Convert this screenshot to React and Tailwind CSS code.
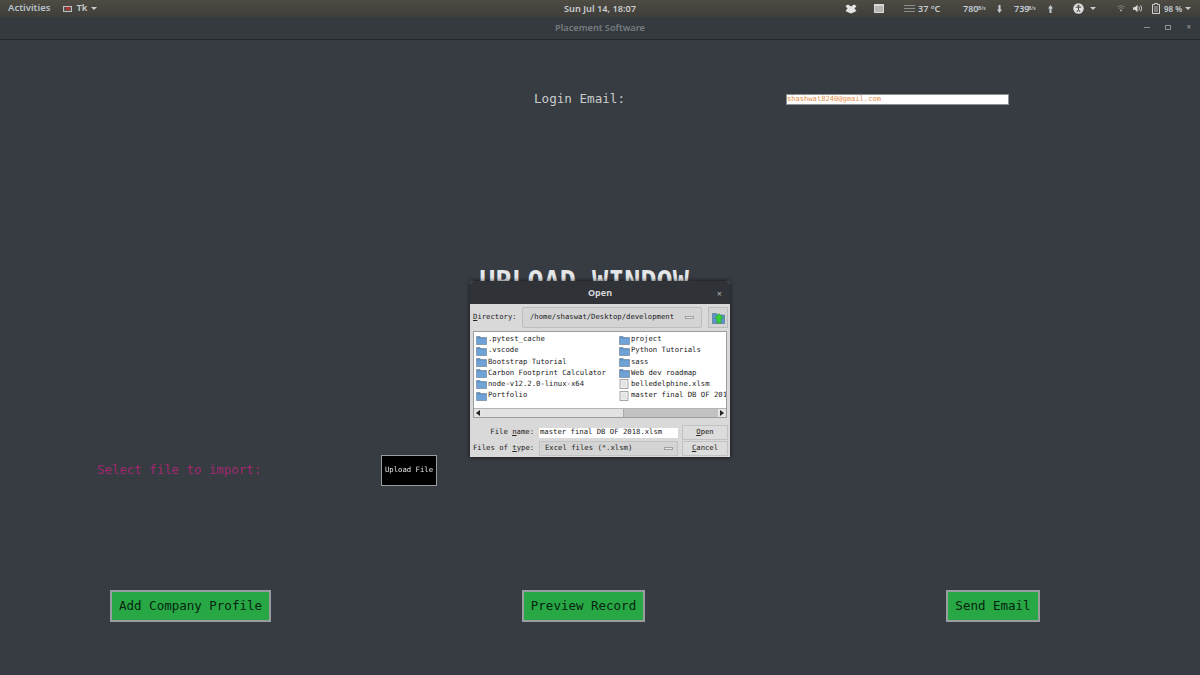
import React from 'react';

const MONO = 'font-["DejaVu_Sans_Mono","Liberation_Mono",monospace]';
const UI = 'font-["Noto_Sans","Open_Sans",sans-serif]';

const Folder = () => (
  <svg width="11" height="10" viewBox="0 0 11 10" className="shrink-0">
    <path d="M0.5 1.5 L4 1.5 L5 2.5 L10.5 2.5 L10.5 9.5 L0.5 9.5 Z" fill="#5f8fc4" stroke="#6b7d92" strokeWidth="0.6" />
    <rect x="1" y="3.5" width="9" height="5.5" fill="#6fa3d8" />
  </svg>
);

const FileIcon = () => (
  <svg width="11" height="10" viewBox="0 0 11 10" className="shrink-0">
    <rect x="1" y="0.5" width="8" height="9" fill="#eeeeee" stroke="#a8a8a8" />
    <path d="M3 3h4M3 5h4M3 7h4" stroke="#cfcfcf" strokeWidth="0.7" />
  </svg>
);

const ComboArrow = () => <span className="h-[3px] w-[9px] shrink-0 border border-[#a0a0a0] bg-[#e8e8e8]" />;

const Caret = ({ className }) => (
  <span className={`h-0 w-0 border-x-[3px] border-t-[3px] border-x-transparent border-t-[#c9cdd0] ${className}`} />
);

const FileRow = ({ name, file }) => (
  <div className="flex h-[11.2px] items-center gap-px whitespace-nowrap">
    {file ? <FileIcon /> : <Folder />}
    <span>{name}</span>
  </div>
);

const GreenButton = ({ children, className }) => (
  <div className={`flex h-[32px] items-center justify-center border-2 border-[#9a9d9f] bg-[#28a745] text-[12.5px] text-[#06240f] ${MONO} ${className}`}>
    {children}
  </div>
);

const TopBar = () => (
  <div className={`flex h-[17px] items-center justify-between bg-gradient-to-b from-[#4e4b43] to-[#3f3e3a] text-[9px] font-semibold text-[#c9cdd0] ${UI}`}>
    <div className="flex items-center">
      <span className="ml-[8px] text-[9.5px] text-[#b9c2c9]">Activities</span>
      <span className="ml-[13px] flex h-[6px] w-[9px] items-center justify-center border border-[#bdbdbd] bg-[#555]">
        <span className="h-[3px] w-[4px] bg-[#b03030]" />
      </span>
      <span className="ml-[4px] text-[9.5px]">Tk</span>
      <Caret className="ml-[4px]" />
    </div>
  </div>
);

const Tray = () => (
  <div className={`absolute left-[845px] top-0 flex h-[17px] items-center whitespace-nowrap text-[9px] font-semibold text-[#c4ccd4] ${UI}`}>
    <svg width="12" height="10" viewBox="0 0 12 10" className="mr-[17px] shrink-0">
      <path d="M0.5 2 L3 0.5 L6 2.5 L9 0.5 L11.5 2 L9.5 4.5 L11.5 7 L8.5 8.5 L6 9.5 L3.5 8.5 L0.5 7 L2.5 4.5 Z" fill="#e4e4e4" />
    </svg>
    <svg width="10" height="9" viewBox="0 0 10 9" className="mr-[20px] shrink-0">
      <rect width="10" height="9" fill="#d8d8d8" />
      <path d="M1 3h8M1 5h8M1 7h8" stroke="#77766f" strokeWidth="0.7" />
    </svg>
    <svg width="11" height="9" viewBox="0 0 11 9" className="mr-[3px] shrink-0">
      <path d="M0 1.5h11M0 4.5h11M0 7.5h11" stroke="#8d8f8c" strokeWidth="1.2" />
    </svg>
    <span className="mr-[24px] w-[21px] text-[9px]">37 °C</span>
    <span className="w-[15px]">780</span>
    <span className="mr-[9px] w-[10px] text-[5px]">B/s</span>
    <svg width="5" height="8" viewBox="0 0 5 8" className="mr-[12px] shrink-0">
      <path d="M1.5 0h2v4.5h1.5L2.5 8 0 4.5h1.5Z" fill="#c4ccd4" />
    </svg>
    <span className="w-[14px]">739</span>
    <span className="mr-[10px] w-[10px] text-[5px]">B/s</span>
    <svg width="5" height="8" viewBox="0 0 5 8" className="mr-[20px] shrink-0">
      <path d="M1.5 8h2V3.5h1.5L2.5 0 0 3.5h1.5Z" fill="#c4ccd4" />
    </svg>
    <svg width="11" height="11" viewBox="0 0 11 11" className="mr-[6px] shrink-0">
      <circle cx="5.5" cy="5.5" r="5.2" fill="#dedede" />
      <circle cx="5.5" cy="2.8" r="1" fill="#45443f" />
      <path d="M2.8 4.2h5.4M5.5 4.2v2.6M5.5 6.5L3.8 9M5.5 6.5L7.2 9" stroke="#45443f" strokeWidth="1" fill="none" />
    </svg>
    <Caret className="mr-[21px]" />
    <svg width="8" height="9" viewBox="0 0 10 9" className="mr-[8px] shrink-0">
      <path d="M0.5 2.5 Q5 -1 9.5 2.5 M2 4.5 Q5 2.2 8 4.5" stroke="#8b8b85" strokeWidth="1" fill="none" />
      <path d="M3.5 6 L6.5 6 L5 8.5 Z" fill="#c9c9c5" />
    </svg>
    <svg width="10" height="9" viewBox="0 0 11 9" className="mr-[9px] shrink-0">
      <path d="M0 3h2L5 0.5v8L2 6H0Z" fill="#dcdcdc" />
      <path d="M6.5 2.5q1.2 2 0 4M8.5 1q2 3.5 0 7" stroke="#dcdcdc" fill="none" />
    </svg>
    <svg width="9" height="11" viewBox="0 0 9 11" className="mr-[3px] shrink-0">
      <path d="M0.5 1.5h2V0.5h3v1h2v9h-7Z" fill="none" stroke="#d2d2d2" />
      <path d="M2 4h4M2 6h4M2 8h4" stroke="#d2d2d2" strokeWidth="0.8" />
    </svg>
    <span className="mr-[4px] w-[17px] text-[8px]">98 %</span>
    <Caret />
  </div>
);

const TitleBar = () => (
  <div className={`relative flex h-[23px] items-center justify-center border-b border-[#24272b] bg-[#353a3f] text-[9.2px] font-semibold text-[#777c80] ${UI}`}>
    Placement Software
    <div className="absolute right-[9px] top-[6px] flex items-center gap-[15px] text-[#8b9094]">
      <span className="h-px w-[6px] bg-[#8b9094]" />
      <span className="h-[5px] w-[6px] border border-[#8b9094]" />
      <span className="text-[8px] leading-none">×</span>
    </div>
  </div>
);

const OpenDialog = () => (
  <div className={`absolute left-[470px] top-[281px] w-[260px] overflow-hidden rounded-t-[4px] bg-[#d9d9d9] text-[7.25px] text-[#222] shadow-[0_0_4px_rgba(0,0,0,0.7)] ${MONO}`}>
    <div className={`relative flex h-[23px] items-center justify-center bg-[#2f3236] text-[9px] font-bold text-[#d4d6d8] ${UI}`}>
      Open
      <span className="absolute right-[8px] top-[6px] text-[9px] font-normal text-[#b0b3b6]">×</span>
    </div>
    <div className="flex items-center pl-[3px] pt-[3px]">
      <span className="w-[49px] shrink-0"><u>D</u>irectory:</span>
      <div className="flex h-[21px] w-[180px] shrink-0 items-center justify-between rounded-[2px] border border-[#bdbdbd] bg-[#d4d4d4] px-[7px]">
        <span>/home/shaswat/Desktop/development</span>
        <ComboArrow />
      </div>
      <div className="ml-[6px] flex h-[21px] w-[20px] shrink-0 items-center justify-center border border-[#bdbdbd] bg-[#d4d4d4]">
        <svg width="13" height="12" viewBox="0 0 13 12">
          <path d="M0.5 1.5h4l1 1.5h7v8.5h-12Z" fill="#5f93c8" stroke="#48698c" strokeWidth="0.6" />
          <path d="M7 1.5 L11.5 6.5 L9 6.5 L9 11 L5 11 L5 6.5 L2.5 6.5 Z" fill="#35d035" stroke="#1f8f2a" strokeWidth="0.4" />
        </svg>
      </div>
    </div>
    <div className="mx-[3px] mt-[3px] border border-[#9d9d9d] bg-white">
      <div className="flex h-[76px] overflow-hidden pl-[2px] pt-[2px]">
        <div className="w-[143px] shrink-0">
          <FileRow name=".pytest_cache" />
          <FileRow name=".vscode" />
          <FileRow name="Bootstrap Tutorial" />
          <FileRow name="Carbon Footprint Calculator" />
          <FileRow name="node-v12.2.0-linux-x64" />
          <FileRow name="Portfolio" />
        </div>
        <div className="min-w-0">
          <FileRow name="project" />
          <FileRow name="Python Tutorials" />
          <FileRow name="sass" />
          <FileRow name="Web dev roadmap" />
          <FileRow name="belledelphine.xlsm" file />
          <FileRow name="master final DB OF 2018.xlsm" file />
        </div>
      </div>
      <div className="flex h-[9px] items-center border-t border-[#b5b5b5] bg-[#e4e4e4]">
        <span className="ml-[2px] h-0 w-0 border-y-[3px] border-r-[4px] border-y-transparent border-r-[#222]" />
        <span className="ml-[2px] h-full w-[141px] bg-[#e2e2e2]" />
        <span className="h-full flex-1 border-l border-[#a8a8a8] bg-[#c2c2c2]" />
        <span className="mx-[2px] h-0 w-0 border-y-[3px] border-l-[4px] border-y-transparent border-l-[#222]" />
      </div>
    </div>
    <div className="flex flex-col gap-px pb-px pl-[3px] pt-[7px]">
      <div className="flex h-[15px] items-center">
        <span className="w-[66px] shrink-0 whitespace-nowrap pr-[5px] text-right">File <u>n</u>ame:</span>
        <span className="flex h-[10px] w-[139px] shrink-0 items-center whitespace-nowrap bg-white pl-px">master final DB OF 2018.xlsm</span>
        <span className="ml-[4px] flex h-[15px] w-[46px] shrink-0 items-center justify-center border border-[#c2c2c2] bg-[#dcdcdc]"><u>O</u>pen</span>
      </div>
      <div className="flex h-[15px] items-center">
        <span className="w-[66px] shrink-0 whitespace-nowrap pr-[5px] text-right">Files of <u>t</u>ype:</span>
        <span className="flex h-[15px] w-[139px] shrink-0 items-center justify-between border border-[#c2c2c2] bg-[#d4d4d4] pl-[5px] pr-[4px]">
          Excel files (*.xlsm)
          <ComboArrow />
        </span>
        <span className="ml-[4px] flex h-[15px] w-[46px] shrink-0 items-center justify-center border border-[#c2c2c2] bg-[#dcdcdc]"><u>C</u>ancel</span>
      </div>
    </div>
  </div>
);

export default function App() {
  return (
    <div className="relative h-[675px] w-[1200px] overflow-hidden bg-[#373b42]">
      <TopBar />
      <Tray />
      <div className={`pointer-events-none absolute left-0 top-[2px] flex w-full justify-center text-[9.2px] font-semibold text-[#c9cdd0] ${UI}`}>
        Sun Jul 14, 18:07
      </div>
      <TitleBar />
      <div className={`flex h-[635px] flex-col ${MONO}`}>
        <div className="box-content flex h-[14px] items-center pl-[534px] pt-[52px]">
          <span className="w-[252px] text-[12.6px] text-[#c9cccb]">Login Email:</span>
          <div className="flex h-[11px] w-[223px] items-center border border-[#8d9094] bg-white text-[7.1px] text-[#e98d45]">
            shashwat8240@gmail.com
          </div>
        </div>
        <div className="mt-[160px] flex h-[30px] justify-center text-[26.8px] font-bold leading-[30px] text-[#e4e6e8]">
          <span className="mr-[32px]">UPLOAD WINDOW</span>
        </div>
        <div className="mt-[159px] flex h-[31px] items-center pl-[97px]">
          <span className="w-[284px] text-[12.4px] text-[#a1296e]">Select file to import:</span>
          <div className="flex h-[31px] w-[56px] items-center justify-center border border-[#9a9d9f] bg-black text-[7.25px] text-[#e2e2e2] will-change-transform">
            Upload File
          </div>
        </div>
        <div className="mt-[104px] flex pl-[110px]">
          <GreenButton className="w-[161px]">Add Company Profile</GreenButton>
          <GreenButton className="ml-[251px] w-[123px]">Preview Record</GreenButton>
          <GreenButton className="ml-[301px] w-[94px]">Send Email</GreenButton>
        </div>
      </div>
      <OpenDialog />
    </div>
  );
}
